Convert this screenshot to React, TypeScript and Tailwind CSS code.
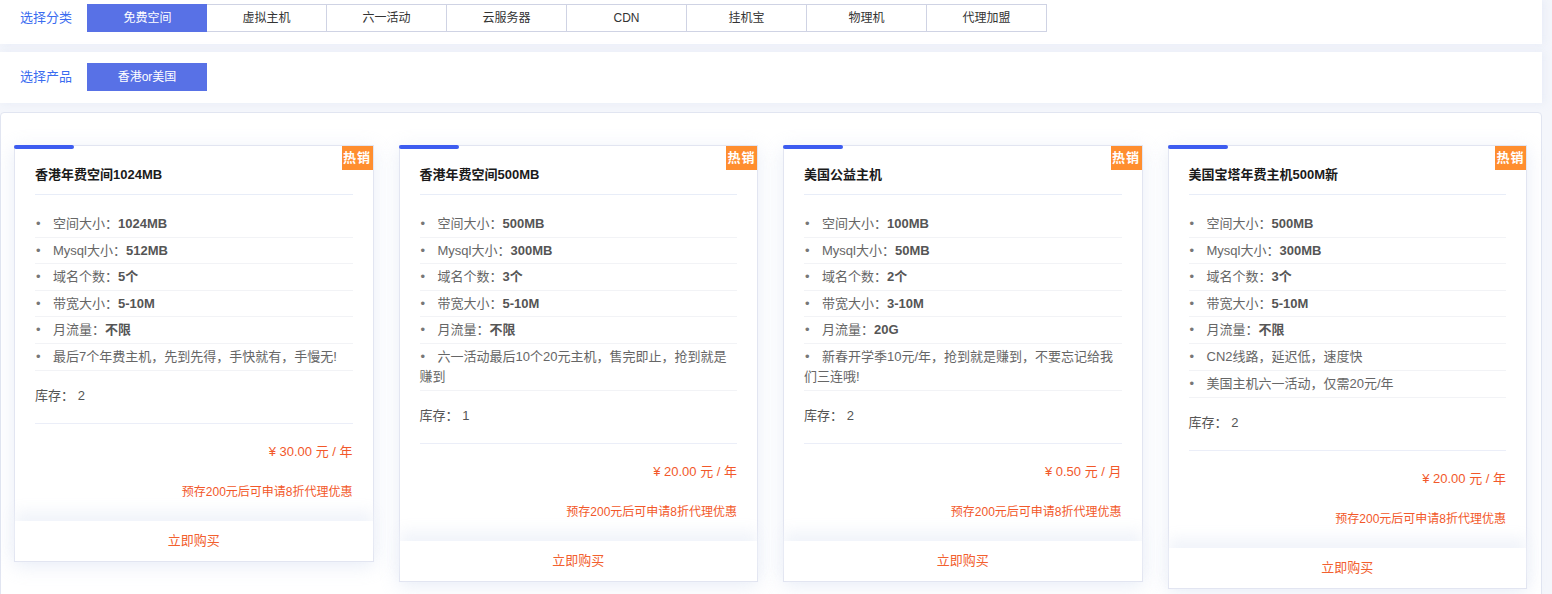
type Product = {
  title: string;
  specs: [string, string][];
  notes: string[];
  stock: number;
  price: string;
};

const categories = ['免费空间', '虚拟主机', '六一活动', '云服务器', 'CDN', '挂机宝', '物理机', '代理加盟'];

const products: Product[] = [
  {
    title: '香港年费空间1024MB',
    specs: [['空间大小', '1024MB'], ['Mysql大小', '512MB'], ['域名个数', '5个'], ['带宽大小', '5-10M'], ['月流量', '不限']],
    notes: ['最后7个年费主机，先到先得，手快就有，手慢无!'],
    stock: 2,
    price: '¥ 30.00 元 / 年',
  },
  {
    title: '香港年费空间500MB',
    specs: [['空间大小', '500MB'], ['Mysql大小', '300MB'], ['域名个数', '3个'], ['带宽大小', '5-10M'], ['月流量', '不限']],
    notes: ['六一活动最后10个20元主机，售完即止，抢到就是赚到'],
    stock: 1,
    price: '¥ 20.00 元 / 年',
  },
  {
    title: '美国公益主机',
    specs: [['空间大小', '100MB'], ['Mysql大小', '50MB'], ['域名个数', '2个'], ['带宽大小', '3-10M'], ['月流量', '20G']],
    notes: ['新春开学季10元/年，抢到就是赚到，不要忘记给我们三连哦!'],
    stock: 2,
    price: '¥ 0.50 元 / 月',
  },
  {
    title: '美国宝塔年费主机500M新',
    specs: [['空间大小', '500MB'], ['Mysql大小', '300MB'], ['域名个数', '3个'], ['带宽大小', '5-10M'], ['月流量', '不限']],
    notes: ['CN2线路，延迟低，速度快', '美国主机六一活动，仅需20元/年'],
    stock: 2,
    price: '¥ 20.00 元 / 年',
  },
];

export default function App() {
  return (
    <div className="min-h-[594px] bg-[#f4f6fb] pr-[10px] font-['Liberation_Sans','Noto_Sans_CJK_SC',sans-serif]">
      <div className="h-[44px] bg-white pt-[4px] flex items-start shadow-[2px_0_8px_rgba(225,231,245,0.7)]">
        <div className="w-[87px] pl-[20px] h-[28px] flex items-center text-[13px] text-[#3b6cf0]">选择分类</div>
        <div className="flex">
          {categories.map((c, i) => (
            <div
              key={c}
              className={
                i === 0
                  ? 'w-[120px] h-[28px] flex items-center justify-center text-[12px] bg-[#5871e6] text-white border-y border-l border-[#5871e6]'
                  : 'w-[120px] h-[28px] flex items-center justify-center text-[12px] text-[#333] border-y border-r border-[#cfd3e4] bg-white'
              }
            >
              {c}
            </div>
          ))}
        </div>
      </div>

      <div className="mt-[8px] h-[51px] bg-white pt-[11px] flex items-start shadow-[2px_0_8px_rgba(225,231,245,0.7)]">
        <div className="w-[87px] pl-[20px] h-[28px] flex items-center text-[13px] text-[#3b6cf0]">选择产品</div>
        <div className="w-[120px] h-[28px] flex items-center justify-center text-[12px] bg-[#5871e6] text-white">香港or美国</div>
      </div>

      <div className="mt-[9px] bg-white border border-[#e1e5f1] rounded-t-[4px] pl-[13px] pr-[14px] pt-[32px] pb-[20px]">
        <div className="grid grid-cols-4 gap-[25px] items-start">
          {products.map((p) => (
            <Card key={p.title} p={p} />
          ))}
        </div>
      </div>
    </div>
  );
}

function Card({ p }: { p: Product }) {
  return (
    <div className="relative bg-white border border-[#e2e5f1] shadow-[0_4px_18px_rgba(205,214,238,0.45)]">
      <div className="absolute -top-px -left-px w-[60px] h-[4px] rounded-[2px] bg-[#3d5cf0]" />
      <div className="absolute top-0 right-0 w-[31px] h-[24px] bg-[#ff8e2f] text-white text-[13px] font-bold flex items-center justify-center whitespace-nowrap tracking-[1px]">
        热销
      </div>

      <div className="px-[20px]">
        <div className="pt-[19px] pb-[9px] leading-[20px] text-[13px] font-bold text-[#1a1a1a] border-b border-[#e8edf8]">
          {p.title}
        </div>

        <ul className="mt-[16px]">
          {p.specs.map(([k, v]) => (
            <li key={k} className="py-[3px] leading-[19.5px] text-[13px] text-[#666] border-b border-[#f2f3f6]">
              <span className="inline-block w-[18px] pl-[1px] text-[#777]">•</span>
              {k}：<b className="text-[#555]">{v}</b>
            </li>
          ))}
          {p.notes.map((n) => (
            <li key={n} className="py-[3px] leading-[20px] text-[13px] text-[#666] border-b border-[#f2f3f6]">
              <span className="inline-block w-[18px] pl-[1px] text-[#777]">•</span>
              {n}
            </li>
          ))}
        </ul>

        <div className="mt-[15px] pb-[17px] leading-[20px] text-[13px] text-[#555] border-b border-[#ebeef8]">
          库存：&nbsp;{p.stock}
        </div>

        <div className="mt-[18px] leading-[20px] text-right text-[13px] text-[#f2582a]">{p.price}</div>
        <div className="mt-[20px] pb-[19px] leading-[20px] text-right text-[12px] text-[#f2582a]">
          预存200元后可申请8折代理优惠
        </div>
      </div>

      <div className="h-[40px] flex items-center justify-center text-[13px] text-[#f2602e] bg-white shadow-[0_-10px_14px_rgba(240,243,250,0.9)]">
        立即购买
      </div>
    </div>
  );
}
